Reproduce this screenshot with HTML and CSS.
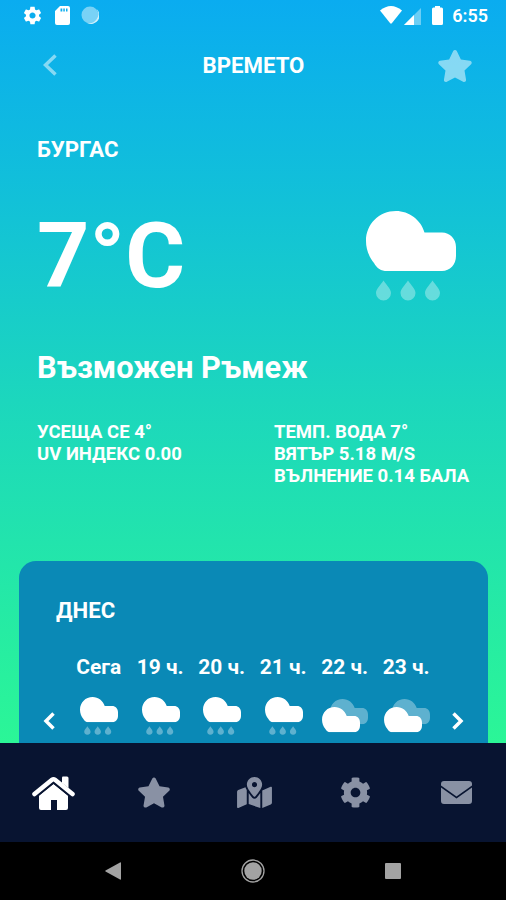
FILE: index.html
```html
<!DOCTYPE html>
<html lang="bg">
<head>
<meta charset="utf-8">
<title>Времето</title>
<link rel="stylesheet" href="styles.css">
</head>
<body>
<svg class="defs" aria-hidden="true">
  <symbol id="star" viewBox="0 0 576 512"><path d="M259.3 17.8L194 150.2 47.9 171.5c-26.2 3.8-36.7 36.1-17.7 54.6l105.7 103-25 145.5c-4.5 26.3 23.2 46 46.4 33.7L288 439.6l130.7 68.7c23.2 12.2 50.9-7.4 46.4-33.7l-25-145.5 105.7-103c19-18.5 8.5-50.8-17.7-54.6L382 150.2 316.7 17.8c-11.7-23.6-45.6-23.9-57.4 0z"/></symbol>
  <symbol id="cloud" viewBox="0 0 90 60"><path d="M30 0C43 0 55 9 58.500 21.500H76C84 21.500 90 28 90 36V45C90 53.500 84 60 76 60H21C15 60 11 57.500 8 52C3 46 0 38 0 30C0 13 13 0 30 0Z"/></symbol>
  <symbol id="rain" viewBox="0 0 90 90">
    <use href="#cloud" width="90" height="60"/>
    <g opacity=".34"><path id="drop" d="M17.500 69.500C20.500 74 25 78 25 82A7.500 7.500 0 0 1 10 82C10 78 14.500 74 17.500 69.500Z"/><use href="#drop" x="24.500"/><use href="#drop" x="49"/></g>
  </symbol>
  <symbol id="clouds" viewBox="0 0 46 34">
    <use href="#cloud" x="8" y="0" width="38" height="25.300" opacity=".34"/>
    <use href="#cloud" x="0" y="8" width="38" height="25.300"/>
  </symbol>
</svg>
<div class="screen">
  <main class="weather">
    <div class="status">
      <div class="status-left">
        <svg width="21" height="21" viewBox="0 0 24 24"><path d="M19.430 12.980c.04-.32.07-.64.07-.98s-.03-.66-.07-.98l2.110-1.650c.19-.15.24-.42.12-.64l-2-3.460c-.12-.22-.39-.3-.61-.22l-2.490 1c-.52-.4-1.080-.73-1.690-.98l-.38-2.650C14.460 2.180 14.250 2 14 2h-4c-.25 0-.46.18-.49.42l-.38 2.650c-.61.25-1.170.59-1.690.98l-2.490-1c-.23-.09-.49 0-.61.22l-2 3.460c-.13.22-.07.49.12.64l2.110 1.650c-.04.32-.07.65-.07.98s.03.66.07.98l-2.110 1.650c-.19.15-.24.42-.12.64l2 3.460c.12.22.39.3.61.22l2.490-1c.52.4 1.080.73 1.690.98l.38 2.650c.03.24.24.42.49.42h4c.25 0 .46-.18.49-.42l.38-2.650c.61-.25 1.170-.59 1.690-.98l2.490 1c.23.09.49 0 .61-.22l2-3.460c.12-.22.07-.49-.12-.64l-2.110-1.650zM12 15.500c-1.930 0-3.500-1.570-3.500-3.500s1.570-3.500 3.500-3.500 3.500 1.570 3.500 3.500-1.570 3.500-3.500 3.500z"/></svg>
        <svg width="15" height="19" viewBox="0 0 15 19"><path fill-rule="evenodd" d="M5 0H13a2 2 0 0 1 2 2V17a2 2 0 0 1-2 2H2a2 2 0 0 1-2-2V5ZM5.500 2.500V5.500H7.300V2.500ZM8.300 2.500V5.500H9.800V2.500ZM11 2.500V5.500H12.500V2.500Z"/></svg>
        <svg width="18" height="18" viewBox="0 0 18 18"><circle cx="9" cy="9" r="8.500" opacity=".45"/><path d="M15.500 3A8.500 8.500 0 0 1 6 17A9 9 0 0 0 15.500 3Z" opacity=".8"/></svg>
      </div>
      <div class="status-right">
        <svg width="22" height="18" viewBox="0 0 22 18"><path d="M0 4.500Q11-4.500 22 4.500L11.800 17.300Q11 18 10.200 17.300Z"/></svg>
        <svg class="signal" width="17" height="17" viewBox="0 0 17 17"><path d="M17 0V17H0Z" opacity=".4"/><path d="M10 7V17H0Z"/></svg>
        <svg class="battery" width="11" height="19" viewBox="0 0 11 19"><path d="M3 0H8V1.500H9.500A1.500 1.500 0 0 1 11 3V17.500A1.500 1.500 0 0 1 9.500 19H1.500A1.500 1.500 0 0 1 0 17.500V3A1.500 1.500 0 0 1 1.500 1.500H3Z"/></svg>
        <span class="clock">6:55</span>
      </div>
    </div>
    <header class="header">
      <svg class="back" width="14" height="22" viewBox="0 0 14 22"><path d="M12.500 1.500L2.500 11L12.500 20.500"/></svg>
      <h1>ВРЕМЕТО</h1>
      <svg class="favorite" width="36" height="32"><use href="#star"/></svg>
    </header>
    <section class="current">
      <h2 class="city">БУРГАС</h2>
      <div class="now">
        <div class="temp">7°C</div>
        <svg class="now-icon" width="90" height="90"><use href="#rain"/></svg>
      </div>
      <div class="summary">Възможен Ръмеж</div>
      <div class="details">
        <div><p class="feels">УСЕЩА СЕ 4°</p><p class="uv">UV ИНДЕКС 0.00</p></div>
        <div><p class="water">ТЕМП. ВОДА 7°</p><p class="wind">ВЯТЪР 5.18 M/S</p><p class="waves">ВЪЛНЕНИЕ 0.14 БАЛА</p></div>
      </div>
    </section>
    <section class="today">
      <h2>ДНЕС</h2>
      <div class="hourly">
        <svg class="arrow" width="12" height="18" viewBox="0 0 12 18"><path d="M10.500 1.500L3 9L10.500 16.500"/></svg>
        <div class="hours">
          <div class="hour"><span>Сега</span><svg width="38" height="38"><use href="#rain"/></svg></div>
          <div class="hour"><span>19 ч.</span><svg width="38" height="38"><use href="#rain"/></svg></div>
          <div class="hour"><span>20 ч.</span><svg width="38" height="38"><use href="#rain"/></svg></div>
          <div class="hour"><span>21 ч.</span><svg width="38" height="38"><use href="#rain"/></svg></div>
          <div class="hour cloudy"><span>22 ч.</span><svg width="46" height="34"><use href="#clouds"/></svg></div>
          <div class="hour cloudy"><span>23 ч.</span><svg width="46" height="34"><use href="#clouds"/></svg></div>
        </div>
        <svg class="arrow" width="12" height="18" viewBox="0 0 12 18"><path d="M1.500 1.500L9 9L1.500 16.500"/></svg>
      </div>
    </section>
  </main>
  <nav class="tabs">
    <svg class="active" width="43" height="35" viewBox="0 0 43 35"><path d="M7 19.500L21.500 8L36 19.500V32Q36 34 34 34H25V24H19V34H9Q7 34 7 32Z"/><path d="M30 1.500Q30 .5 31 .5H35Q36.500 .5 36.500 2V12L30 7Z"/><path class="roof" d="M2.500 18L20 3.800Q21.500 2.600 23 3.800L40.500 18"/><path class="gap" d="M4.500 21L21.500 7L38.500 21"/></svg>
    <svg width="34" height="31"><use href="#star"/></svg>
    <svg width="35" height="31" viewBox="0 0 576 512"><path d="M288 0c-69.590 0-126 56.410-126 126 0 56.260 82.350 158.800 113.900 196.020 6.390 7.540 17.820 7.540 24.200 0C331.650 284.800 414 182.260 414 126 414 56.410 357.590 0 288 0zm0 168c-23.200 0-42-18.800-42-42s18.800-42 42-42 42 18.800 42 42-18.800 42-42 42zM20.120 215.950A32.006 32.006 0 0 0 0 245.660v250.320c0 11.320 11.430 19.060 21.940 14.860L160 448V214.920c-8.840-15.980-16.070-31.540-21.250-46.420L20.120 215.950zM288 359.670c-14.070 0-27.380-6.180-36.510-16.960-19.660-23.200-40.570-49.620-59.490-76.720v182l192 64V266c-18.920 27.090-39.820 53.520-59.490 76.720-9.130 10.770-22.440 16.950-36.510 16.950zm266.060-198.510L416 224v288l139.880-55.950A31.996 31.996 0 0 0 576 426.340V176.020c0-11.320-11.430-19.060-21.940-14.860z"/></svg>
    <svg width="31" height="31" viewBox="0 0 512 512"><path d="M487.400 315.700l-42.600-24.600c4.300-23.200 4.300-47 0-70.200l42.600-24.600c4.900-2.800 7.100-8.600 5.500-14-11.100-35.600-30-67.800-54.700-94.600-3.800-4.100-10-5.100-14.800-2.300L380.800 110c-17.900-15.400-38.500-27.300-60.800-35.100V25.800c0-5.600-3.900-10.500-9.400-11.700-36.700-8.200-74.300-7.800-109.200 0-5.500 1.200-9.400 6.100-9.400 11.700V75c-22.200 7.900-42.800 19.800-60.800 35.100L88.700 85.500c-4.900-2.800-11-1.900-14.800 2.300-24.700 26.700-43.600 58.900-54.700 94.600-1.700 5.400.6 11.200 5.500 14L67.300 221c-4.300 23.200-4.300 47 0 70.200l-42.600 24.600c-4.900 2.800-7.100 8.600-5.500 14 11.100 35.600 30 67.800 54.700 94.600 3.800 4.100 10 5.100 14.800 2.300l42.600-24.600c17.900 15.400 38.500 27.300 60.800 35.100v49.200c0 5.600 3.900 10.500 9.400 11.700 36.700 8.200 74.300 7.800 109.200 0 5.500-1.200 9.400-6.100 9.400-11.700v-49.200c22.200-7.900 42.800-19.800 60.800-35.100l42.600 24.600c4.900 2.800 11 1.900 14.800-2.300 24.700-26.700 43.600-58.900 54.700-94.600 1.500-5.500-.7-11.300-5.600-14.100zM256 336c-44.100 0-80-35.900-80-80s35.900-80 80-80 80 35.900 80 80-35.900 80-80 80z"/></svg>
    <svg width="31" height="23" viewBox="0 0 31 23"><path d="M3 0H28Q31 0 31 3V4.500L15.500 15.500L0 4.500V3Q0 0 3 0Z"/><path d="M0 6.500L15.500 17.500L31 6.500V20Q31 23 28 23H3Q0 23 0 20Z"/></svg>
  </nav>
  <div class="system">
    <svg width="16" height="18" viewBox="0 0 16 18"><path d="M15 .5Q16 0 16 1V17Q16 18 15 17.500L.5 9.500Q0 9 .5 8.500Z"/></svg>
    <svg width="24" height="24" viewBox="0 0 24 24"><circle cx="12" cy="12" r="8.700"/><circle class="ring" cx="12" cy="12" r="11"/></svg>
    <svg width="16" height="16" viewBox="0 0 16 16"><rect width="16" height="16" rx="1"/></svg>
  </div>
</div>
</body>
</html>
```
FILE: styles.css
```css
* { box-sizing: border-box; margin: 0; padding: 0; }
body { font-family: Roboto, "Liberation Sans", sans-serif; font-weight: 700; color: #fff; }
svg { display: block; fill: #fff; flex: none; }
.defs { display: none; }
.screen { width: 506px; height: 900px; overflow: hidden; display: flex; flex-direction: column; background: #000; }
.weather { height: 743px; flex: none; overflow: hidden; background: linear-gradient(#0aacf0 0%, #12c1d8 27%, #1cd7bd 54%, #23e6aa 76%, #2bf697 100%); }
.status { height: 32px; padding: 0 18px 0 22px; display: flex; justify-content: space-between; }
.status-left { display: flex; align-items: center; gap: 11.500px; padding-bottom: 2px; }
.status-right { display: flex; align-items: center; padding-bottom: 2px; }
.signal { margin: 2px 0 0 2px; }
.battery { margin-left: 11px; }
.clock { margin-left: 9px; font-size: 18px; font-weight: 600; line-height: 20px; padding-top: 2px; }
.header { height: 66px; padding: 0 33px 0 43px; display: grid; grid-template-columns: 36px 1fr 36px; align-items: center; }
.header h1 { font-size: 22.200px; line-height: 26px; padding: 0 9px 0 0; text-align: center; }
.back, .arrow { fill: none; stroke: #fff; stroke-width: 3.500; }
.back { opacity: .5; }
.favorite { opacity: .5; margin-top: 1px; }
.current { height: 463px; padding: 38px 37px 0; }
.city { font-size: 22.200px; line-height: 26px; }
.now { margin-top: 38px; display: flex; justify-content: space-between; padding-right: 13px; }
.temp { font-size: 91.500px; line-height: 108px; padding: 2px 0 1px; }
.now-icon { margin-top: 11px; }
.summary { margin-top: 39px; font-size: 30.800px; line-height: 36px; }
.details { margin-top: 34.500px; display: grid; grid-template-columns: 237px 1fr; font-size: 18.500px; line-height: 22px; white-space: nowrap; }
.today { height: 240px; margin: 0 18px 0 19px; border-radius: 17px; background: #0a89b6; padding: 36px 24px 0; }
.today h2 { padding-left: 13px; font-size: 22.200px; line-height: 26px; }
.hourly { margin-top: 31px; display: flex; align-items: flex-start; }
.hours { flex: 1; display: grid; grid-template-columns: repeat(6, 61.500px); margin-left: 13px; }
.hour { display: flex; flex-direction: column; align-items: center; font-size: 20.900px; line-height: 26px; white-space: nowrap; }
.hour svg { margin-top: 17px; margin-left: 1px; }
.hour.cloudy svg { margin-top: 19px; }
.arrow { margin-top: 58px; }
.tabs { height: 99px; flex: none; background: #081431; padding: 0 0 0 3px; display: grid; grid-template-columns: repeat(5, 100.700px); justify-items: center; align-items: center; }
.tabs svg { fill: #8991a4; }
.tabs .active { fill: #fff; margin-top: 2px; }
.roof { fill: none; stroke: #fff; stroke-width: 4.500; stroke-linecap: round; }
.gap { fill: none; stroke: #081431; stroke-width: 1.300; }
.system { flex: 1; display: flex; justify-content: space-between; align-items: center; padding: 0 105px; }
.system svg { fill: #a3a3a3; }
.system .ring { fill: none; stroke: #a3a3a3; stroke-width: 1.300; }
```
